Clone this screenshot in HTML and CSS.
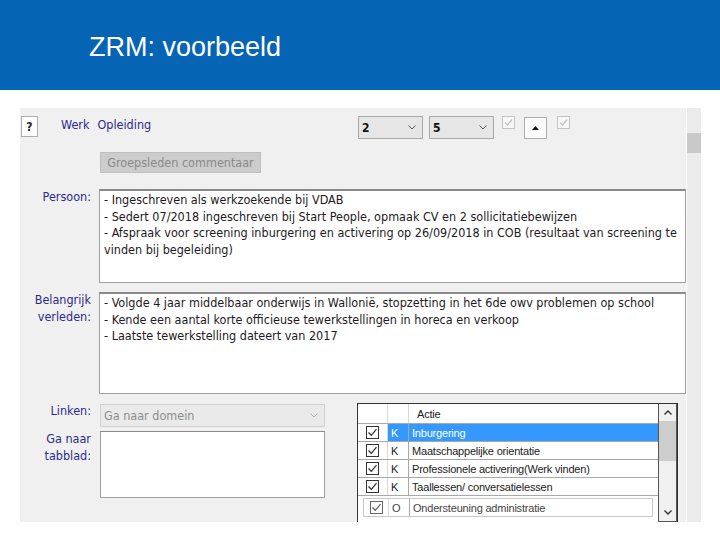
FILE: index.html
```html
<!DOCTYPE html>
<html lang="nl">
<head>
<meta charset="utf-8">
<title>ZRM: voorbeeld</title>
<link rel="stylesheet" href="styles.css">
</head>
<body>
<header class="top">
  <h1 class="title">ZRM: voorbeeld</h1>
</header>
<main class="stage">
  <div class="panel">
    <div class="row1">
      <button class="help">?</button>
      <div class="tabs"><span class="tab">Werk</span><span class="tab">Opleiding</span></div>
      <div class="controls">
        <div class="combo num"><span>2</span><svg class="chev" viewBox="0 0 8 5" width="8" height="5"><path d="M0.5 0.5 L4 4 L7.5 0.5" fill="none" stroke="#555" stroke-width="1"/></svg></div>
        <div class="combo num"><span>5</span><svg class="chev" viewBox="0 0 8 5" width="8" height="5"><path d="M0.5 0.5 L4 4 L7.5 0.5" fill="none" stroke="#555" stroke-width="1"/></svg></div>
        <span class="dchk"><svg viewBox="0 0 13 13" width="13" height="13"><rect x="0.5" y="0.5" width="12" height="12" fill="#f7f7f7" stroke="#c4c4c4"/><path d="M3 6.5 L5.5 9 L10 3.5" fill="none" stroke="#c0c0c0" stroke-width="1.3"/></svg></span>
        <button class="up"><svg viewBox="0 0 7 4" width="7" height="4"><path d="M0 4 L3.5 0 L7 4 Z" fill="#111"/></svg></button>
        <span class="dchk"><svg viewBox="0 0 13 13" width="13" height="13"><rect x="0.5" y="0.5" width="12" height="12" fill="#f7f7f7" stroke="#c4c4c4"/><path d="M3 6.5 L5.5 9 L10 3.5" fill="none" stroke="#c0c0c0" stroke-width="1.3"/></svg></span>
      </div>
    </div>
    <div class="row2"><button class="gbtn">Groepsleden commentaar</button></div>
    <div class="field f1">
      <div class="lbl">Persoon:</div>
      <div class="memo m1">- Ingeschreven als werkzoekende bij VDAB<br>- Sedert 07/2018 ingeschreven bij Start People, opmaak CV en 2 sollicitatiebewijzen<br>- Afspraak voor screening inburgering en activering op 26/09/2018 in COB (resultaat van screening te vinden bij begeleiding)</div>
    </div>
    <div class="field f2">
      <div class="lbl">Belangrijk<br>verleden:</div>
      <div class="memo m2">- Volgde 4 jaar middelbaar onderwijs in Wallonië, stopzetting in het 6de owv problemen op school<br>- Kende een aantal korte officieuse tewerkstellingen in horeca en verkoop<br>- Laatste tewerkstelling dateert van 2017</div>
    </div>
    <div class="bottom">
      <div class="left">
        <div class="brow">
          <div class="lbl">Linken:</div>
          <div class="combo link"><span>Ga naar domein</span><svg class="chev" viewBox="0 0 8 5" width="8" height="5"><path d="M0.5 0.5 L4 4 L7.5 0.5" fill="none" stroke="#aaa" stroke-width="1"/></svg></div>
        </div>
        <div class="brow">
          <div class="lbl">Ga naar<br>tabblad:</div>
          <div class="memo m3"></div>
        </div>
      </div>
      <div class="grid">
        <div class="gbody">
          <div class="grow head"><div class="c1"></div><div class="c2"></div><div class="c3">Actie</div></div>
          <div class="grow sel"><div class="c1"><svg viewBox="0 0 13 13" width="13" height="13"><rect x="0.5" y="0.5" width="12" height="12" fill="#fff" stroke="#333"/><path d="M2.5 6.5 L5.3 9.3 L10.5 3.2" fill="none" stroke="#333" stroke-width="1.3"/></svg></div><div class="c2">K</div><div class="c3">Inburgering</div></div>
          <div class="grow"><div class="c1"><svg viewBox="0 0 13 13" width="13" height="13"><rect x="0.5" y="0.5" width="12" height="12" fill="#fff" stroke="#333"/><path d="M2.5 6.5 L5.3 9.3 L10.5 3.2" fill="none" stroke="#333" stroke-width="1.3"/></svg></div><div class="c2">K</div><div class="c3">Maatschappelijke orientatie</div></div>
          <div class="grow"><div class="c1"><svg viewBox="0 0 13 13" width="13" height="13"><rect x="0.5" y="0.5" width="12" height="12" fill="#fff" stroke="#333"/><path d="M2.5 6.5 L5.3 9.3 L10.5 3.2" fill="none" stroke="#333" stroke-width="1.3"/></svg></div><div class="c2">K</div><div class="c3">Professionele activering(Werk vinden)</div></div>
          <div class="grow"><div class="c1"><svg viewBox="0 0 13 13" width="13" height="13"><rect x="0.5" y="0.5" width="12" height="12" fill="#fff" stroke="#333"/><path d="M2.5 6.5 L5.3 9.3 L10.5 3.2" fill="none" stroke="#333" stroke-width="1.3"/></svg></div><div class="c2">K</div><div class="c3">Taallessen/ conversatielessen</div></div>
          <div class="grow shifted"><div class="c1"><svg viewBox="0 0 13 13" width="13" height="13"><rect x="0.5" y="0.5" width="12" height="12" fill="#fff" stroke="#666"/><path d="M2.5 6.5 L5.3 9.3 L10.5 3.2" fill="none" stroke="#666" stroke-width="1.3"/></svg></div><div class="c2">O</div><div class="c3">Ondersteuning administratie</div></div>
        </div>
        <div class="gscroll">
          <svg class="arr" viewBox="0 0 8 5" width="8" height="5"><path d="M0.5 4.5 L4 1 L7.5 4.5" fill="none" stroke="#333" stroke-width="1.4"/></svg>
          <div class="gthumb"></div>
          <div class="gspace"></div>
          <svg class="arr" viewBox="0 0 8 5" width="8" height="5"><path d="M0.5 0.5 L4 4 L7.5 0.5" fill="none" stroke="#333" stroke-width="1.4"/></svg>
        </div>
      </div>
    </div>
  </div>
  <div class="vscroll"><div class="vthumb"></div></div>
</main>
</body>
</html>
```

FILE: styles.css
```css
* { box-sizing: border-box; }
html, body { margin: 0; padding: 0; background: #fff; }
body { width: 720px; height: 540px; overflow: hidden; }

.top {
  height: 90px;
  background: #0565b4;
  display: flex;
  align-items: center;
  padding-left: 89px;
}
.title {
  margin: 0;
  font-family: "Liberation Sans", Arial, sans-serif;
  font-weight: normal;
  font-size: 27px;
  color: #fff;
  padding-top: 5px;
}

.stage {
  display: flex;
  padding: 18px 0 0 20px;
  gap: 1px;
}
.panel {
  width: 666px;
  height: 414px;
  background: #f0f0f0;
  font-family: "DejaVu Sans Condensed", "DejaVu Sans", sans-serif;
  font-size: 12.5px;
  color: #1e1a24;
  display: flex;
  flex-direction: column;
  overflow: hidden;
}
.panel > * { flex: none; }
.vscroll {
  width: 14px;
  height: 414px;
  background: #ebebeb;
  padding-top: 25px;
}
.vthumb { height: 20px; background: #c9c9c9; }

.row1 {
  display: flex;
  align-items: flex-start;
  padding: 8px 0 0 1px;
  height: 44px;
}
.help {
  width: 17px; height: 21px;
  margin: 0; padding: 0;
  border: 1px solid #adadad;
  background: #fdfdfd;
  font-family: inherit; font-size: 12px; font-weight: bold;
  color: #222;
}
.tabs {
  display: flex;
  gap: 8px;
  margin-left: 23px;
  margin-top: 1px;
  width: 297px;
  color: #2b2b8a;
}
.controls { display: flex; align-items: flex-start; }
.combo {
  display: flex;
  align-items: center;
  justify-content: space-between;
  border: 1px solid #a9a9a9;
  background: #e6e6e6;
  color: #111;
}
.combo.num { width: 65px; height: 23px; padding: 0 6px 0 3px; margin-right: 6px; font-weight: bold; font-size: 12px; }
.dchk { display: block; margin: 0 9px 0 2px; height: 13px; }
.up {
  width: 23px; height: 22px; margin: 1px 8px 0 0; padding: 0;
  border: 1px solid #adadad;
  background: #fbfbfb;
  display: flex; align-items: center; justify-content: center;
}

.row2 { padding-left: 80px; height: 37px; }
.gbtn {
  width: 161px; height: 21px;
  margin: 0; padding: 0;
  border: 1px solid #bfbfbf;
  background: #cccccc;
  font-family: inherit; font-size: 12.5px;
  color: #8a8a8a;
}

.field { display: flex; gap: 8px; }
.lbl {
  width: 71px;
  flex: none;
  text-align: right;
  color: #2b2b8a;
  line-height: 16.5px;
}
.memo {
  flex: 1;
  background: #fff;
  border: 1px solid #a0a0a0;
  border-top: 2px solid #8a8a8a;
  padding: 1px 0 1px 4px;
  line-height: 16.5px;
}
.m1 { height: 94px; }
.f2 { margin-top: 9px; }
.m2 { height: 102px; }

.bottom { display: flex; margin-top: 9px; }
.left { width: 305px; display: flex; flex-direction: column; gap: 4px; }
.brow { display: flex; gap: 9px; }
.combo.link {
  width: 225px; height: 23px; margin-top: 1px;
  background: #eaeaea; border-color: #d0d0d0;
  color: #8c8c8c; padding: 0 6px 0 3px;
}
.m3 { flex: none; width: 225px; height: 67px; border-top-width: 1px; }
.brow .lbl { width: 71px; }

.grid {
  margin-left: 32px;
  width: 321px;
  height: 130px;
  border: 1px solid #333;
  border-bottom: none;
  background: #fff;
  display: flex;
  font-family: "Liberation Sans", Arial, sans-serif;
  font-size: 11px;
  letter-spacing: -0.2px;
  color: #222;
}
.gbody { width: 300px; display: flex; flex-direction: column; }
.grow { display: flex; height: 18px; border-bottom: 1px solid #a8a8a8; flex: none; }
.grow.head { height: 20px; }
.grow > div { display: flex; align-items: center; }
.c1 { width: 30px; justify-content: center; border-right: 1px solid #d8d8d8; }
.c2 { width: 21px; padding-left: 3px; border-right: 1px solid #a8a8a8; }
.c3 { flex: 1; padding-left: 3px; }
.head .c2 { border-right-color: #d8d8d8; }
.head .c3 { padding-left: 8px; }
.sel .c2, .sel .c3 { background: #3399ff; color: #fff; }
.sel .c1 { background: #fff; }
.shifted { margin: 2px 5px 0 5px; height: 19px; border: 1px solid #c8c8c8; color: #444; }
.shifted .c1 { width: 25px; }
.gscroll {
  width: 19px;
  border-left: 1px solid #555;
  border-right: 1px solid #555;
  background: #f0f0f0;
  display: flex;
  flex-direction: column;
  align-items: center;
  height: 118px;
  border-bottom: 1px solid #555;
}
.arr { margin: 6px 0; flex: none; }
.gthumb { width: 17px; height: 40px; background: #cdcdcd; flex: none; }
.gspace { flex: 1; }
```
